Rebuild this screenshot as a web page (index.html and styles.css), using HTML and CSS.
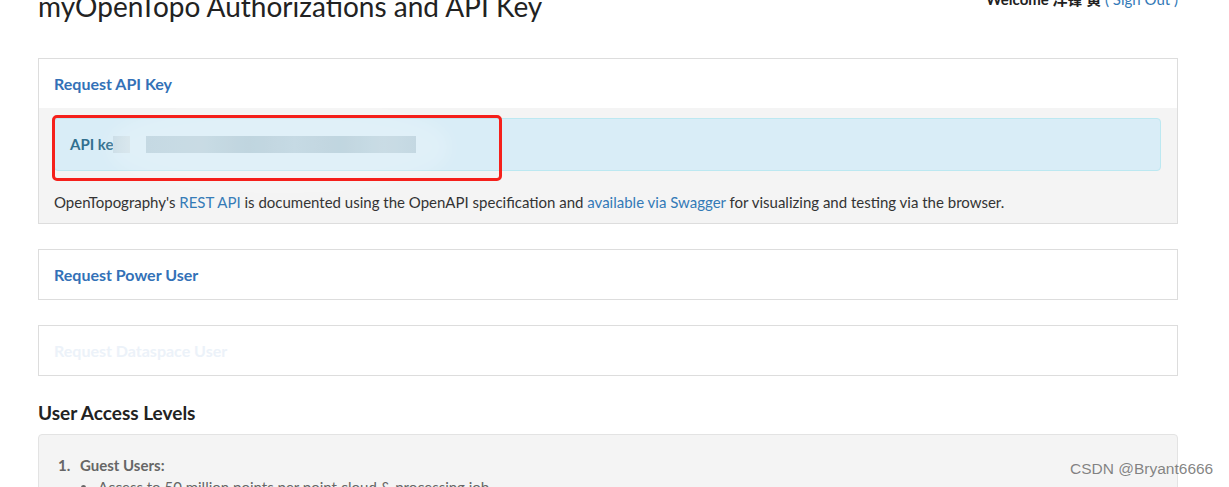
FILE: index.html
```html
<!DOCTYPE html>
<html lang="en">
<head>
<meta charset="utf-8">
<title>myOpenTopo Authorizations and API Key</title>
<link rel="stylesheet" href="styles.css">
</head>
<body>
<div class="page">
  <header class="top">
    <h1 class="title">myOpenTopo Authorizations and API Key</h1>
    <div class="welcome"><b>Welcome 洋锋 黄</b> <a href="#">( Sign Out )</a></div>
  </header>

  <section class="panel">
    <div class="panel-heading"><a href="#">Request API Key</a></div>
    <div class="panel-body">
      <div class="alert"><b>API ke</b><span class="blur b1"></span><span class="blur b2"></span></div>
      <p class="note">OpenTopography's <a href="#">REST API</a> is documented using the OpenAPI specification and <a href="#">available via Swagger</a> for visualizing and testing via the browser.</p>
      <div class="haze"></div>
      <div class="redbox"></div>
    </div>
  </section>

  <section class="panel">
    <div class="panel-heading"><a href="#">Request Power User</a></div>
  </section>

  <section class="panel">
    <div class="panel-heading"><a href="#" class="faint">Request Dataspace User</a></div>
  </section>

  <h3 class="levels">User Access Levels</h3>
  <div class="well">
    <ol class="levels-list">
      <li><span class="num">1.</span><b>Guest Users:</b>
        <ul><li>Access to 50 million points per point cloud &amp; processing job</li></ul>
      </li>
    </ol>
  </div>
</div>
<div class="watermark">CSDN @Bryant6666</div>
</body>
</html>
```

FILE: styles.css
```css
html, body {
  margin: 0;
  padding: 0;
  height: 487px;
  overflow: hidden;
  background: #fff;
}
body {
  font-family: Lato, "Noto Sans CJK SC", sans-serif;
  font-size: 15px;
  color: #333;
  position: relative;
}
a { color: #337ab7; text-decoration: none; }

.page {
  width: 1140px;
  margin-left: 38px;
}

.top {
  display: flex;
  justify-content: space-between;
  align-items: flex-start;
  margin-bottom: 36px;
  height: 22px;
}
.title {
  margin: -9px 0 0 0;
  font-size: 28px;
  line-height: 31px;
  font-weight: 400;
  color: #222;
}
.welcome {
  margin-top: -11px;
  font-size: 15px;
  line-height: 20px;
  color: #222;
  white-space: nowrap;
}
.welcome b { font-weight: 700; }

.panel {
  border: 1px solid #ddd;
  margin-bottom: 25px;
  background: #fff;
}
.panel-heading {
  padding: 14px 15px;
  font-size: 16px;
  line-height: 21px;
  font-weight: 700;
}
.panel-heading a { color: #3371b7; }
.panel-heading a.faint { color: #ecf2f9; }

.panel-body {
  position: relative;
  background: #f4f4f4;
  padding: 10px 16px 11px 15px;
}
.alert {
  position: relative;
  z-index: 1;
  background: #d9edf7;
  border: 1px solid #bce8f1;
  border-radius: 4px;
  padding: 15px;
  color: #31708f;
  line-height: 21px;
  display: flex;
  align-items: center;
}
.alert b { font-weight: 700; }
.blur {
  display: inline-block;
  height: 17px;
}
.b1 {
  width: 17px;
  background: linear-gradient(90deg, #c7dbe5, #d1e2ea);
}
.b2 {
  width: 270px;
  margin-left: 16px;
  background: linear-gradient(90deg, #b9d1dd 0%, #bdd4df 20%, #b2ccd8 38%, #bad2de 55%, #b3cdd9 72%, #bed5e0 88%, #b8d0dc 100%);
}
.haze {
  position: absolute;
  left: 70px;
  top: -6px;
  width: 340px;
  height: 90px;
  border-radius: 45%;
  background: rgba(255, 255, 255, 0.18);
  filter: blur(8px);
  z-index: 2;
  pointer-events: none;
}
.note {
  position: relative;
  z-index: 1;
  margin: 21px 0 0 0;
  line-height: 20px;
}
.redbox {
  position: absolute;
  left: 13px;
  top: 7px;
  width: 444px;
  height: 60px;
  border: 3px solid #f5201b;
  border-radius: 5px;
  z-index: 3;
}

.levels {
  margin: 0 0 9px 0;
  font-size: 19px;
  line-height: 24px;
  font-weight: 700;
  color: #222;
}
.well {
  background: #f4f4f4;
  border: 1px solid #e3e3e3;
  border-radius: 4px;
  height: 80px;
  padding: 19px 19px 0 19px;
}
.levels-list {
  list-style: none;
  margin: 0;
  padding: 0;
  color: #666;
  font-size: 15px;
  line-height: 22px;
}
.num {
  display: inline-block;
  width: 22px;
  font-weight: 700;
}
.levels-list b { font-weight: 700; }
.levels-list ul {
  margin: 0;
  padding-left: 40px;
  font-size: 15px;
  line-height: 22px;
  list-style: disc;
}

.watermark {
  position: absolute;
  left: 1070px;
  top: 459px;
  font-family: "Liberation Sans", Arial, sans-serif;
  font-size: 15.5px;
  line-height: 20px;
  color: rgba(110, 110, 110, 0.85);
  white-space: nowrap;
}
```
